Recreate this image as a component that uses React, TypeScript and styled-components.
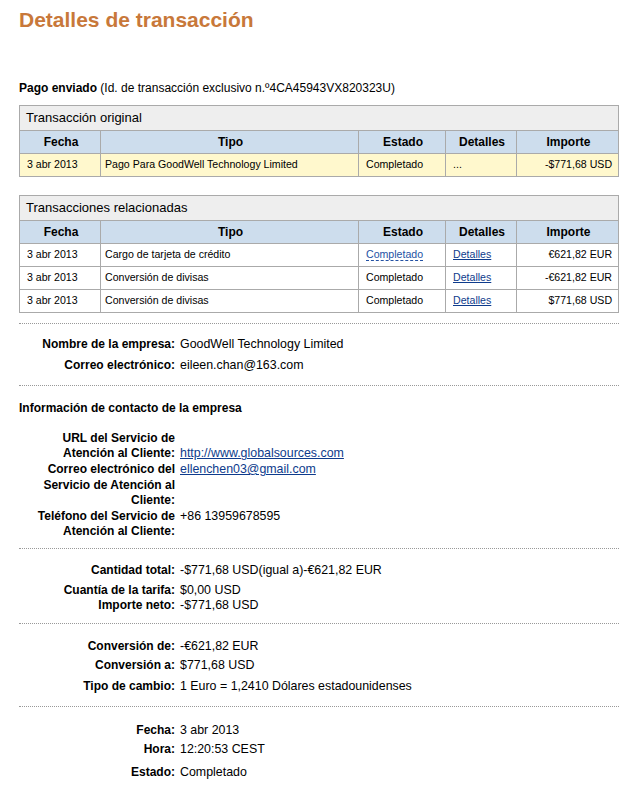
import React from "react";
import styled, { createGlobalStyle } from "styled-components";

const GlobalStyle = createGlobalStyle`
  html, body { margin: 0; padding: 0; background: #ffffff; }
  body { font-family: "Liberation Sans", Arial, sans-serif; color: #000000; }
`;

const Page = styled.div`
  width: 600px;
  padding: 8px 19px 20px 19px;
  font-family: "Liberation Sans", Arial, sans-serif;
  font-size: 12px;
`;

const Title = styled.h1`
  margin: 0;
  font-size: 21px;
  line-height: 24px;
  font-weight: bold;
  color: #c8783a;
`;

const Sent = styled.p`
  margin: 49px 0 0 0;
  font-size: 12px;
  line-height: 14px;
  b { font-weight: bold; }
`;

const Table = styled.table<{ $mt: number }>`
  margin-top: ${(p) => p.$mt}px;
  width: 600px;
  border-collapse: collapse;
  table-layout: fixed;
  font-size: 11px;
`;

const Col = styled.col<{ $w: number }>`
  width: ${(p) => p.$w}px;
`;

const CaptionCell = styled.th`
  background: #eeeeee;
  border: 1px solid #aaaaaa;
  text-align: left;
  font-weight: normal;
  font-size: 13px;
  line-height: 24px;
  padding: 0 0 0 6px;
`;

const Th = styled.th`
  background: #cddded;
  border: 1px solid #aaaaaa;
  font-size: 12px;
  font-weight: bold;
  line-height: 21px;
  padding: 1px 0 0 2px;
  text-align: center;
`;

const Tr = styled.tr<{ $highlight?: boolean }>`
  background: ${(p) => (p.$highlight ? "#fff8cd" : "#ffffff")};
`;

const Td = styled.td<{ $align?: "left" | "right"; $indent: number }>`
  border: 1px solid #aaaaaa;
  font-size: 10.6px;
  line-height: 20px;
  padding: 0 ${(p) => (p.$align === "right" ? p.$indent : 0)}px 2px
    ${(p) => (p.$align === "right" ? 0 : p.$indent)}px;
  text-align: ${(p) => p.$align ?? "left"};
  white-space: nowrap;
  overflow: hidden;
`;

const DashedLink = styled.a`
  color: #2452a4;
  text-decoration: none;
  border-bottom: 1px dashed #2452a4;
`;

const Link = styled.a`
  color: #0e3b8c;
  text-decoration: underline;
`;

const Separator = styled.div<{ $mt: number }>`
  margin-top: ${(p) => p.$mt}px;
  height: 0;
  border-top: 1px dotted #999999;
`;

const Row = styled.div<{ $mt: number; $valueEnd?: boolean }>`
  display: grid;
  grid-template-columns: 156px 1fr;
  column-gap: 5px;
  margin-top: ${(p) => p.$mt}px;
  font-size: 12px;
  line-height: 15.6px;
  & > span:last-child {
    align-self: ${(p) => (p.$valueEnd ? "end" : "start")};
  }
`;

const Label = styled.span`
  font-weight: bold;
  text-align: right;
`;

const Value = styled.span`
  font-size: 12.4px;
`;

const SectionTitle = styled.div<{ $mt: number }>`
  margin-top: ${(p) => p.$mt}px;
  font-size: 12px;
  line-height: 15.6px;
  font-weight: bold;
`;

type TxRow = {
  date: string;
  type: string;
  status: React.ReactNode;
  details: React.ReactNode;
  amount: string;
};

const cols = [81, 258, 87, 71, 102];

function TxTable(props: { title: string; rows: TxRow[]; highlight?: boolean; mt: number }) {
  return (
    <Table $mt={props.mt}>
      <colgroup>
        {cols.map((w, i) => (
          <Col key={i} $w={w} />
        ))}
      </colgroup>
      <thead>
        <tr>
          <CaptionCell colSpan={5}>{props.title}</CaptionCell>
        </tr>
        <tr>
          <Th>Fecha</Th>
          <Th>Tipo</Th>
          <Th>Estado</Th>
          <Th>Detalles</Th>
          <Th>Importe</Th>
        </tr>
      </thead>
      <tbody>
        {props.rows.map((r, i) => (
          <Tr key={i} $highlight={props.highlight}>
            <Td $indent={7}>{r.date}</Td>
            <Td $indent={4}>{r.type}</Td>
            <Td $indent={7}>{r.status}</Td>
            <Td $indent={7}>{r.details}</Td>
            <Td $align="right" $indent={6}>
              {r.amount}
            </Td>
          </Tr>
        ))}
      </tbody>
    </Table>
  );
}

export default function App() {
  return (
    <>
      <GlobalStyle />
      <Page>
        <Title>Detalles de transacción</Title>
        <Sent>
          <b>Pago enviado</b> (Id. de transacción exclusivo n.º4CA45943VX820323U)
        </Sent>

        <TxTable
          mt={10}
          title="Transacción original"
          highlight
          rows={[
            {
              date: "3 abr 2013",
              type: "Pago Para GoodWell Technology Limited",
              status: "Completado",
              details: "...",
              amount: "-$771,68 USD",
            },
          ]}
        />

        <TxTable
          mt={18}
          title="Transacciones relacionadas"
          rows={[
            {
              date: "3 abr 2013",
              type: "Cargo de tarjeta de crédito",
              status: <DashedLink href="#">Completado</DashedLink>,
              details: <Link href="#">Detalles</Link>,
              amount: "€621,82 EUR",
            },
            {
              date: "3 abr 2013",
              type: "Conversión de divisas",
              status: "Completado",
              details: <Link href="#">Detalles</Link>,
              amount: "-€621,82 EUR",
            },
            {
              date: "3 abr 2013",
              type: "Conversión de divisas",
              status: "Completado",
              details: <Link href="#">Detalles</Link>,
              amount: "$771,68 USD",
            },
          ]}
        />

        <Separator $mt={10} />
        <Row $mt={13}>
          <Label>Nombre de la empresa:</Label>
          <Value>GoodWell Technology Limited</Value>
        </Row>
        <Row $mt={5}>
          <Label>Correo electrónico:</Label>
          <Value>eileen.chan@163.com</Value>
        </Row>

        <Separator $mt={12} />
        <SectionTitle $mt={15}>Información de contacto de la empresa</SectionTitle>
        <Row $mt={14} $valueEnd>
          <Label>URL del Servicio de Atención al Cliente:</Label>
          <Value>
            <Link href="#">http://www.globalsources.com</Link>
          </Value>
        </Row>
        <Row $mt={0}>
          <Label>Correo electrónico del Servicio de Atención al Cliente:</Label>
          <Value>
            <Link href="#">ellenchen03@gmail.com</Link>
          </Value>
        </Row>
        <Row $mt={0}>
          <Label>Teléfono del Servicio de Atención al Cliente:</Label>
          <Value>+86 13959678595</Value>
        </Row>

        <Separator $mt={8} />
        <Row $mt={14}>
          <Label>Cantidad total:</Label>
          <Value>-$771,68 USD(igual a)-€621,82 EUR</Value>
        </Row>
        <Row $mt={4}>
          <Label>Cuantía de la tarifa:</Label>
          <Value>$0,00 USD</Value>
        </Row>
        <Row $mt={0}>
          <Label>Importe neto:</Label>
          <Value>-$771,68 USD</Value>
        </Row>

        <Separator $mt={9} />
        <Row $mt={15}>
          <Label>Conversión de:</Label>
          <Value>-€621,82 EUR</Value>
        </Row>
        <Row $mt={4}>
          <Label>Conversión a:</Label>
          <Value>$771,68 USD</Value>
        </Row>
        <Row $mt={5}>
          <Label>Tipo de cambio:</Label>
          <Value>1 Euro = 1,2410 Dólares estadounidenses</Value>
        </Row>

        <Separator $mt={11} />
        <Row $mt={16}>
          <Label>Fecha:</Label>
          <Value>3 abr 2013</Value>
        </Row>
        <Row $mt={4}>
          <Label>Hora:</Label>
          <Value>12:20:53 CEST</Value>
        </Row>
        <Row $mt={7}>
          <Label>Estado:</Label>
          <Value>Completado</Value>
        </Row>
      </Page>
    </>
  );
}
